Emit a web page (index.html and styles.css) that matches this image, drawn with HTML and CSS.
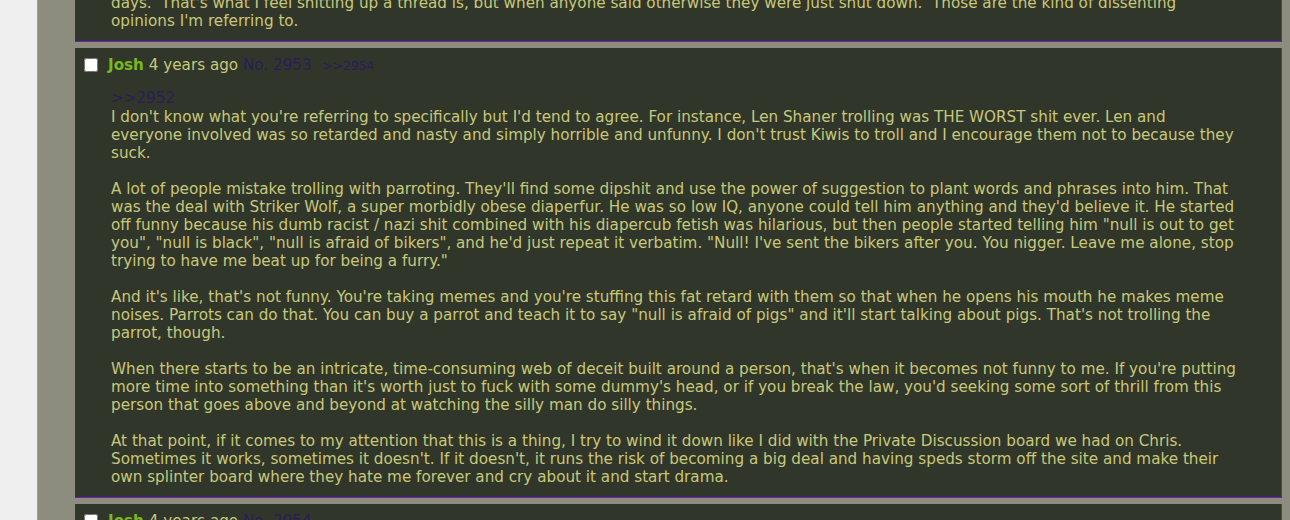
FILE: index.html
```html
<!DOCTYPE html>
<html>
<head>
<meta charset="utf-8">
<link rel="stylesheet" href="styles.css">
</head>
<body>
<div class="page">
  <div class="gutter"></div>
  <main class="thread">
    <article class="post cut">
      <blockquote class="body">days.&nbsp; That's what I feel shitting up a thread is, but when anyone said otherwise they were just shut down.&nbsp; Those are the kind of dissenting opinions I'm referring to.</blockquote>
    </article>
    <article class="post">
      <div class="head"><input class="pick" type="checkbox"><span class="name">Josh</span> <span class="time">4 years ago</span> <a class="no">No. 2953</a> <a class="backlink">&gt;&gt;2954</a></div>
      <blockquote class="body"><a class="quotelink">&gt;&gt;2952</a><br>I don't know what you're referring to specifically but I'd tend to agree. For instance, Len Shaner trolling was THE WORST shit ever. Len and everyone involved was so retarded and nasty and simply horrible and unfunny. I don't trust Kiwis to troll and I encourage them not to because they suck.<br><br>A lot of people mistake trolling with parroting. They'll find some dipshit and use the power of suggestion to plant words and phrases into him. That was the deal with Striker Wolf, a super morbidly obese diaperfur. He was so low IQ, anyone could tell him anything and they'd believe it. He started off funny because his dumb racist / nazi shit combined with his diapercub fetish was hilarious, but then people started telling him "null is out to get you", "null is black", "null is afraid of bikers", and he'd just repeat it verbatim. "Null! I've sent the bikers after you. You nigger. Leave me alone, stop trying to have me beat up for being a furry."<br><br>And it's like, that's not funny. You're taking memes and you're stuffing this fat retard with them so that when he opens his mouth he makes meme noises. Parrots can do that. You can buy a parrot and teach it to say "null is afraid of pigs" and it'll start talking about pigs. That's not trolling the parrot, though.<br><br>When there starts to be an intricate, time-consuming web of deceit built around a person, that's when it becomes not funny to me. If you're putting more time into something than it's worth just to fuck with some dummy's head, or if you break the law, you'd seeking some sort of thrill from this person that goes above and beyond at watching the silly man do silly things.<br><br>At that point, if it comes to my attention that this is a thing, I try to wind it down like I did with the Private Discussion board we had on Chris. Sometimes it works, sometimes it doesn't. If it doesn't, it runs the risk of becoming a big deal and having speds storm off the site and make their own splinter board where they hate me forever and cry about it and start drama.</blockquote>
    </article>
    <article class="post">
      <div class="head"><input class="pick" type="checkbox"><span class="name">Josh</span> <span class="time">4 years ago</span> <a class="no">No. 2954</a></div>
      <blockquote class="body">&nbsp;</blockquote>
    </article>
  </main>
</div>
</body>
</html>
```

FILE: styles.css
```css
html, body {
  margin: 0;
  padding: 0;
  height: 520px;
  overflow: hidden;
  background: #efefef;
}
.page {
  display: flex;
  height: 520px;
  font-family: "DejaVu Sans", sans-serif;
  font-size: 15.2px;
  line-height: 18px;
  color: #c9c77a;
}
.gutter {
  width: 37px;
  flex: none;
  background: #efefef;
}
.thread {
  flex: 1;
  background: #8d8d7f;
  border-left: 1px solid #9d9d96;
  padding: 0 8px 0 37px;
  margin-top: -6px;
}
.post {
  background: #30372a;
  border-right: 1px solid #6a22b8;
  border-bottom: 1px solid #6a22b8;
  margin-bottom: 6px;
  padding: 8px 0 11px;
}
.post.cut {
  padding-top: 0;
}
.post.cut .body {
  margin-top: 0;
}
.head {
  padding-left: 9px;
  height: 18px;
  white-space: nowrap;
}
.pick {
  width: 14px;
  height: 14px;
  margin: 0 10px 0 0;
  vertical-align: -2px;
}
.name {
  color: #79b81f;
  font-weight: bold;
}
.time {
  color: #c9c77a;
}
.no {
  color: #2a1c5a;
  text-decoration: none;
}
.backlink {
  color: #2a1c5a;
  font-size: 12.3px;
  margin-left: 6px;
  text-decoration: none;
}
.body {
  margin: 15px 40px 0 36px;
}
.quotelink {
  color: #2a1c5a;
  display: inline-block;
  line-height: 19px;
  text-decoration: none;
}
```
